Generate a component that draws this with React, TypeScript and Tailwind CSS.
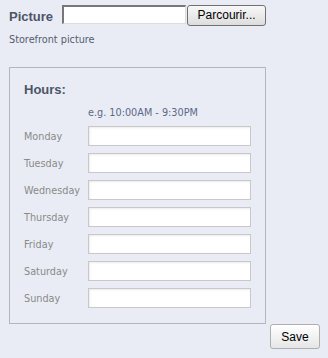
const days = ["Monday", "Tuesday", "Wednesday", "Thursday", "Friday", "Saturday", "Sunday"];

export default function App() {
  return (
    <div className="w-[328px] h-[358px] bg-[#e9ecf4] font-['DejaVu_Sans',sans-serif] overflow-hidden">
      <div className="flex items-start pt-[5px] pl-[9px]">
        <span className="mt-[4px] mr-[9px] font-['Liberation_Sans',Arial,sans-serif] font-bold text-[13px] leading-[15px] text-[#4e5468]">
          Picture
        </span>
        <input
          type="text"
          className="w-[124px] h-[19px] bg-white border border-t-2 border-l-2 border-t-[#777] border-l-[#777] border-r-[#dcdcdc] border-b-[#dcdcdc] outline-none"
        />
        <button className="ml-[1px] w-[79px] h-[21px] rounded-[3px] border border-[#707070] bg-gradient-to-b from-[#f8f8f8] to-[#dddddd] font-['Liberation_Sans',Arial,sans-serif] text-[12px] leading-[19px] text-black">
          Parcourir...
        </button>
      </div>

      <p className="ml-[9px] mt-[8px] text-[9.7px] leading-[12px] text-[#555c70]">Storefront picture</p>

      <div className="ml-[9px] mt-[21px] w-[257px] h-[257px] border border-[#b3b6be] pt-[14px] pl-[14px]">
        <h3 className="font-['Liberation_Sans',Arial,sans-serif] font-bold text-[13px] leading-[15px] text-[#4e5468]">
          Hours:
        </h3>
        <p className="ml-[64px] mt-[10px] text-[9.7px] leading-[12px] text-[#5d6886]">e.g. 10:00AM - 9:30PM</p>
        <div className="mt-[7px] flex flex-col gap-[7px]">
          {days.map((d) => (
            <div key={d} className="flex items-center">
              <span className="w-[64px] text-[9.7px] leading-[12px] text-[#8a8a8a] pt-[2px]">{d}</span>
              <input
                type="text"
                className="w-[163px] h-[20px] bg-white border border-[#c8c8c8] shadow-[inset_1px_1px_2px_rgba(0,0,0,0.08)] outline-none"
              />
            </div>
          ))}
        </div>
      </div>

      <div className="flex justify-end pr-[8px]">
        <button className="w-[50px] h-[25px] rounded-[3px] border border-[#aeaeae] bg-gradient-to-b from-white to-[#e6e6e6] font-['Liberation_Sans',Arial,sans-serif] text-[12px] text-black">
          Save
        </button>
      </div>
    </div>
  );
}
